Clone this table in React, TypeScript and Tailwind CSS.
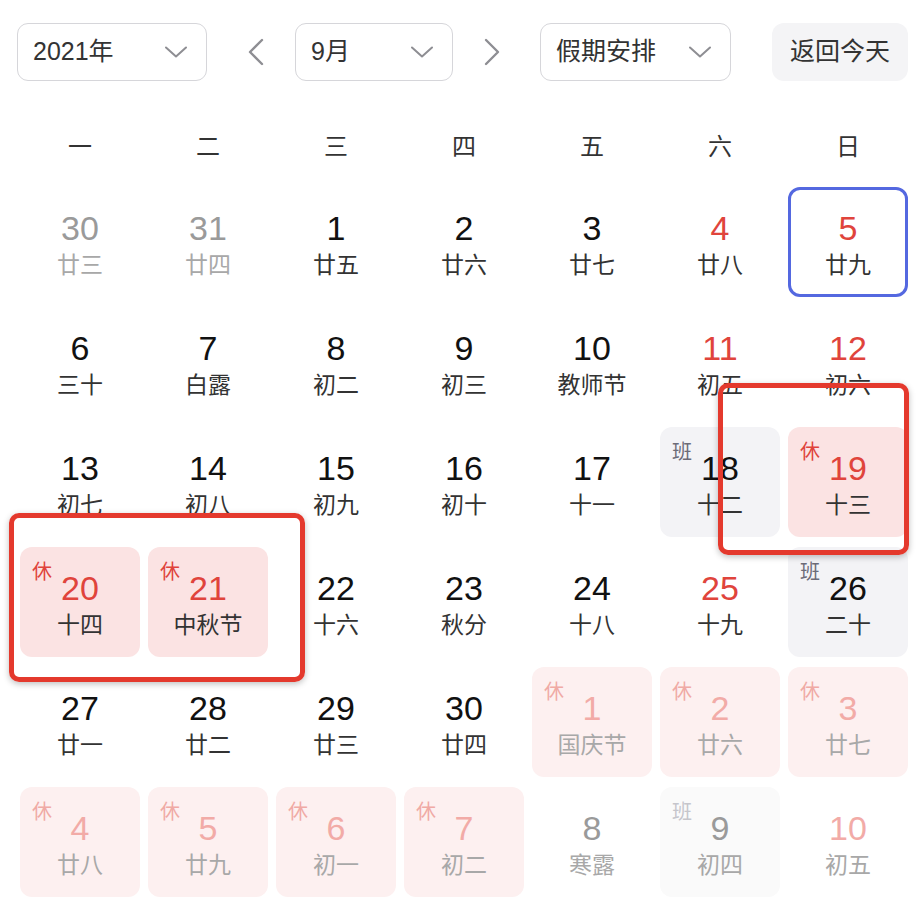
import React from "react";

type Cell = {
  d: number;
  l: string;
  kind?: "prev" | "next";
  red?: boolean;
  tag?: "休" | "班";
  today?: boolean;
};

const weekdays = ["一", "二", "三", "四", "五", "六", "日"];

const cells: Cell[] = [
  { d: 30, l: "廿三", kind: "prev" },
  { d: 31, l: "廿四", kind: "prev" },
  { d: 1, l: "廿五" },
  { d: 2, l: "廿六" },
  { d: 3, l: "廿七" },
  { d: 4, l: "廿八", red: true },
  { d: 5, l: "廿九", red: true, today: true },

  { d: 6, l: "三十" },
  { d: 7, l: "白露" },
  { d: 8, l: "初二" },
  { d: 9, l: "初三" },
  { d: 10, l: "教师节" },
  { d: 11, l: "初五", red: true },
  { d: 12, l: "初六", red: true },

  { d: 13, l: "初七" },
  { d: 14, l: "初八" },
  { d: 15, l: "初九" },
  { d: 16, l: "初十" },
  { d: 17, l: "十一" },
  { d: 18, l: "十二", tag: "班" },
  { d: 19, l: "十三", red: true, tag: "休" },

  { d: 20, l: "十四", red: true, tag: "休" },
  { d: 21, l: "中秋节", red: true, tag: "休" },
  { d: 22, l: "十六" },
  { d: 23, l: "秋分" },
  { d: 24, l: "十八" },
  { d: 25, l: "十九", red: true },
  { d: 26, l: "二十", tag: "班" },

  { d: 27, l: "廿一" },
  { d: 28, l: "廿二" },
  { d: 29, l: "廿三" },
  { d: 30, l: "廿四" },
  { d: 1, l: "国庆节", kind: "next", red: true, tag: "休" },
  { d: 2, l: "廿六", kind: "next", red: true, tag: "休" },
  { d: 3, l: "廿七", kind: "next", red: true, tag: "休" },

  { d: 4, l: "廿八", kind: "next", red: true, tag: "休" },
  { d: 5, l: "廿九", kind: "next", red: true, tag: "休" },
  { d: 6, l: "初一", kind: "next", red: true, tag: "休" },
  { d: 7, l: "初二", kind: "next", red: true, tag: "休" },
  { d: 8, l: "寒露", kind: "next" },
  { d: 9, l: "初四", kind: "next", tag: "班" },
  { d: 10, l: "初五", kind: "next", red: true },
];

function Chevron() {
  return (
    <svg width="22" height="12" viewBox="0 0 22 12" fill="none">
      <polyline points="1,1.5 11,10.5 21,1.5" stroke="#8e8e93" strokeWidth="2" strokeLinecap="round" strokeLinejoin="round" />
    </svg>
  );
}

function Arrow({ dir }: { dir: "left" | "right" }) {
  return (
    <button className="flex h-[58px] w-[40px] items-center justify-center">
      <svg width="16" height="28" viewBox="0 0 16 28" fill="none">
        <polyline
          points={dir === "left" ? "14,2 2,14 14,26" : "2,2 14,14 2,26"}
          stroke="#8e8e93"
          strokeWidth="2.4"
          strokeLinecap="round"
          strokeLinejoin="round"
        />
      </svg>
    </button>
  );
}

function Select({ label, width }: { label: string; width: string }) {
  return (
    <div
      className={`flex h-[58px] ${width} items-center justify-between rounded-[11px] border-[1.5px] border-[#d6d6da] pl-[15px] pr-[19px] text-[25px] text-[#333]`}
    >
      <span>{label}</span>
      <Chevron />
    </div>
  );
}

function DayCell({ c }: { c: Cell }) {
  const next = c.kind === "next";
  const prev = c.kind === "prev";

  let bg = "";
  if (c.tag === "休") bg = next ? "bg-[#fdf0f0]" : "bg-[#fbe3e3]";
  if (c.tag === "班") bg = next ? "bg-[#fafafa]" : "bg-[#f3f3f6]";

  let num = "text-[#111]";
  if (prev || next) num = "text-[#9a9a9a]";
  if (c.red) num = next ? "text-[#f2aba7]" : "text-[#e0443c]";

  const lunar = prev || next ? "text-[#a8a8a8]" : "text-[#333]";

  let tagColor = "";
  if (c.tag === "休") tagColor = next ? "text-[#f0aaa5]" : "text-[#e0443c]";
  if (c.tag === "班") tagColor = next ? "text-[#c6c6cc]" : "text-[#6c6c78]";

  return (
    <div
      className={`relative flex h-[110px] flex-col items-center justify-center rounded-[12px] pt-[6px] ${bg} ${
        c.today ? "border-[3px] border-[#5468e0]" : ""
      }`}
    >
      {c.tag && (
        <span className={`absolute left-[12px] top-[13px] text-[20px] leading-[24px] ${tagColor}`}>{c.tag}</span>
      )}
      <span className={`mt-[-2px] text-[34px] leading-[38px] ${num}`}>{c.d}</span>
      <span className={`mt-[3px] text-[23px] leading-[30px] ${lunar}`}>{c.l}</span>
    </div>
  );
}

export default function App() {
  return (
    <div
      className="relative h-[916px] w-[924px] overflow-hidden bg-white"
      style={{ fontFamily: '"Liberation Sans", "Noto Sans CJK SC", sans-serif' }}
    >
      <div className="flex items-center pl-[17px] pt-[23px]">
        <Select label="2021年" width="w-[190px]" />
        <div className="ml-[29px]">
          <Arrow dir="left" />
        </div>
        <div className="ml-[19px]">
          <Select label="9月" width="w-[158px]" />
        </div>
        <div className="ml-[19px]">
          <Arrow dir="right" />
        </div>
        <div className="ml-[28px]">
          <Select label="假期安排" width="w-[191px]" />
        </div>
        <button className="ml-[41px] flex h-[58px] w-[136px] items-center justify-center rounded-[12px] bg-[#f4f4f6] text-[25px] text-[#333]">
          返回今天
        </button>
      </div>

      <div className="ml-[20px] mt-[36px] grid h-[60px] w-[888px] grid-cols-7 gap-x-[8px]">
        {weekdays.map((w) => (
          <div key={w} className="flex items-center justify-center text-[24px] text-[#333]">
            {w}
          </div>
        ))}
      </div>

      <div className="ml-[20px] mt-[10px] grid w-[888px] grid-cols-7 gap-x-[8px] gap-y-[10px]">
        {cells.map((c, i) => (
          <DayCell key={i} c={c} />
        ))}
      </div>

      {/* annotation boxes */}
      <div className="pointer-events-none absolute left-[718px] top-[383px] h-[172px] w-[191px] rounded-[10px] border-[5px] border-[#e4392d] shadow-[0_2px_6px_rgba(0,0,0,0.25)]" />
      <div className="pointer-events-none absolute left-[9px] top-[513px] h-[169px] w-[296px] rounded-[10px] border-[5px] border-[#e4392d] shadow-[0_2px_6px_rgba(0,0,0,0.25)]" />
    </div>
  );
}
